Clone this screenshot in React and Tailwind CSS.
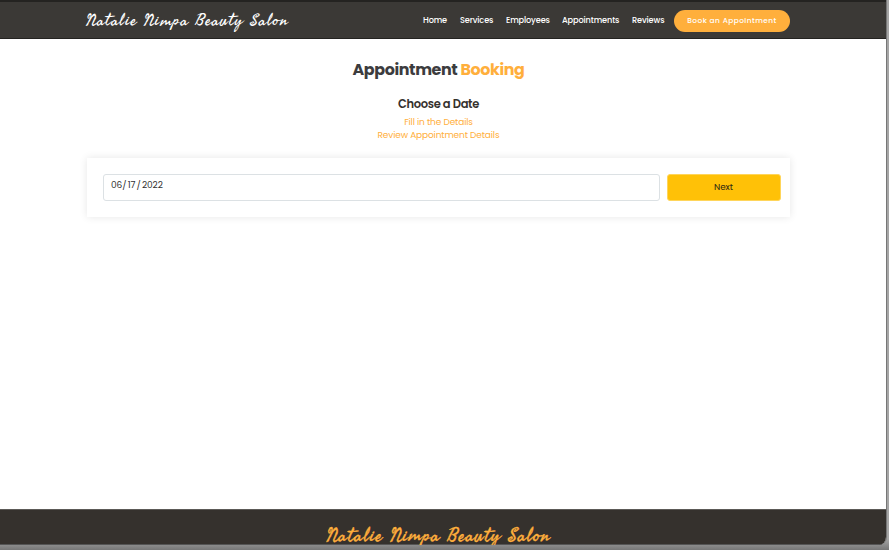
const links = [
  { label: 'Home', cls: 'w-[24px]' },
  { label: 'Services', cls: 'w-[33px]' },
  { label: 'Employees', cls: 'w-[43px]' },
  { label: 'Appointments', cls: 'w-[57px]' },
  { label: 'Reviews', cls: 'w-[32px]' },
];

export default function App() {
  return (
    <div className="h-[550px] w-[889px] overflow-hidden bg-gradient-to-b from-[#a5a5a5] from-98% to-[#777777] pr-[2px] pb-[5px] font-['Poppins','Inter',sans-serif] text-[#35312d]">
      <div className="flex h-[545px] flex-col overflow-hidden rounded-br-[8px] border-r border-[#777777] bg-white">
        <header className="flex h-[39px] shrink-0 items-center border-t-2 border-b border-[#242321] bg-[#3b3936] pl-[86px] text-white">
          <div className="h-[36px] w-[337px] font-['Satisfy','Seaweed_Script',cursive] text-[17px] leading-[37px] tracking-[1.1px] whitespace-nowrap">
            Natalie Nimpa Beauty Salon
          </div>
          <nav className="flex gap-[13px] pt-[1px] text-[8.2px] font-medium tracking-[-0.13px] whitespace-nowrap">
            {links.map((l) => (
              <a key={l.label} className={l.cls}>{l.label}</a>
            ))}
          </nav>
          <button className="mt-[1px] ml-[10px] h-[22px] w-[116px] rounded-full bg-[#ffaf3c] text-[7.4px] font-medium tracking-[0.45px] whitespace-nowrap">
            Book an Appointment
          </button>
        </header>
        <main className="flex h-[470px] shrink-0 flex-col">
          <h1 className="mt-[18px] pr-[9px] text-center text-[15.9px] leading-[25px] font-bold tracking-[-0.38px] text-[#3c3c3e]">
            Appointment <span className="text-[#ffaf3c]">Booking</span>
          </h1>
          <div className="mt-[14px] pr-[9px] text-center">
            <p className="text-[11.5px] leading-[17px] font-semibold tracking-[-0.33px]">Choose a Date</p>
            <p className="mt-[3px] text-[9px] leading-[13px] tracking-[-0.14px] text-[#ffaf3c]">Fill in the Details</p>
            <p className="text-[9px] leading-[13px] tracking-[-0.14px] text-[#ffaf3c]">Review Appointment Details</p>
          </div>
          <section className="mt-[16px] ml-[87px] flex h-[59px] w-[703px] gap-[7px] bg-white pt-[16px] pl-[16px] shadow-[0_0_8px_rgba(0,0,0,0.1)]">
            <div className="h-[27px] w-[557px] rounded-[3px] border border-[#dce1e4] pt-[3px] pl-[7px] text-[9px] leading-[15px] tracking-[-0.05px] text-[#303030] [word-spacing:-1.2px]">
              06/ 17 / 2022
            </div>
            <button className="h-[27px] w-[114px] rounded-[3px] border border-[#ffd55a] bg-[#ffc107] pr-[1px] text-[8.8px] text-[#2a2515]">
              Next
            </button>
          </section>
        </main>
        <footer className="h-[36px] border-t border-b border-t-[#5c5a57] border-b-[#555555] bg-[#35312d] pt-[13px] pr-[9px] text-center font-['Satisfy','Seaweed_Script',cursive] text-[19px] leading-[27px] tracking-[1.15px] text-[#ffaf3c] [-webkit-text-stroke:0.3px_#ffaf3c]">
          Natalie Nimpa Beauty Salon
        </footer>
      </div>
    </div>
  );
}
